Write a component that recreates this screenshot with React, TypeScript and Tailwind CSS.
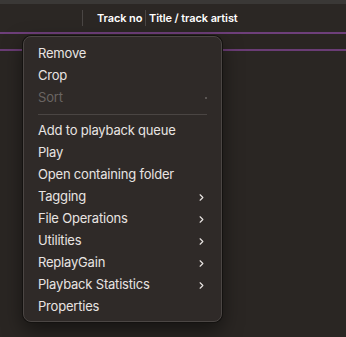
import { ChevronRight } from "lucide-react";

type Item = { label: string; sub?: boolean; disabled?: boolean; sep?: boolean };

const items: Item[] = [
  { label: "Remove" },
  { label: "Crop" },
  { label: "Sort", disabled: true },
  { label: "", sep: true },
  { label: "Add to playback queue" },
  { label: "Play" },
  { label: "Open containing folder" },
  { label: "Tagging", sub: true },
  { label: "File Operations", sub: true },
  { label: "Utilities", sub: true },
  { label: "ReplayGain", sub: true },
  { label: "Playback Statistics", sub: true },
  { label: "Properties" },
];

export default function App() {
  return (
    <div
      className="relative h-[337px] w-[346px] overflow-hidden bg-[#2a2623] text-[13px]"
      style={{ fontFamily: "Inter, 'Liberation Sans', sans-serif" }}
    >
      <div className="h-[4px] bg-[#3a3836]" />
      <div className="flex h-[28px] items-center whitespace-nowrap bg-[#2b2724] text-[11px] font-semibold text-white">
        <div className="w-[82px]" />
        <div className="h-[16px] w-px bg-[#4a4644]" />
        <div className="w-[62px] pl-[14px] leading-[16px] tracking-[-0.1px]">Track no</div>
        <div className="h-[16px] w-px bg-[#4a4644]" />
        <div className="pl-[3px] leading-[16px] tracking-[-0.1px]">Title / track artist</div>
      </div>
      <div className="h-[2px] bg-[#6e3f7a]" />
      <div className="h-[15px] bg-[#2a2522]" />
      <div className="h-[2px] bg-[#6a3c75]" />

      <div className="absolute left-[23px] top-[36px] w-[199px] rounded-[8px] border border-[#4b4644] bg-[#2f2a28] px-[5px] pt-[6px] pb-[3px] shadow-[0_0_0_1px_#141210,0_8px_20px_rgba(0,0,0,0.5)]">
        {items.map((it, i) =>
          it.sep ? (
            <div key={i} className="mx-[9px] my-[5px] h-px bg-[#4a4543]" />
          ) : (
            <div
              key={i}
              className={
                "flex h-[22px] items-center justify-between pl-[9px] pr-[9px] tracking-[-0.2px] " +
                (it.disabled ? "text-[#6a6562]" : "text-[#e8e4e2]")
              }
            >
              <span>{it.label}</span>
              {it.sub && <ChevronRight className="h-[11px] w-[11px]" strokeWidth={2.5} />}
              {it.disabled && <span className="h-[2px] w-[2px] rounded-full bg-[#6a6562]" />}
            </div>
          )
        )}
      </div>
    </div>
  );
}
